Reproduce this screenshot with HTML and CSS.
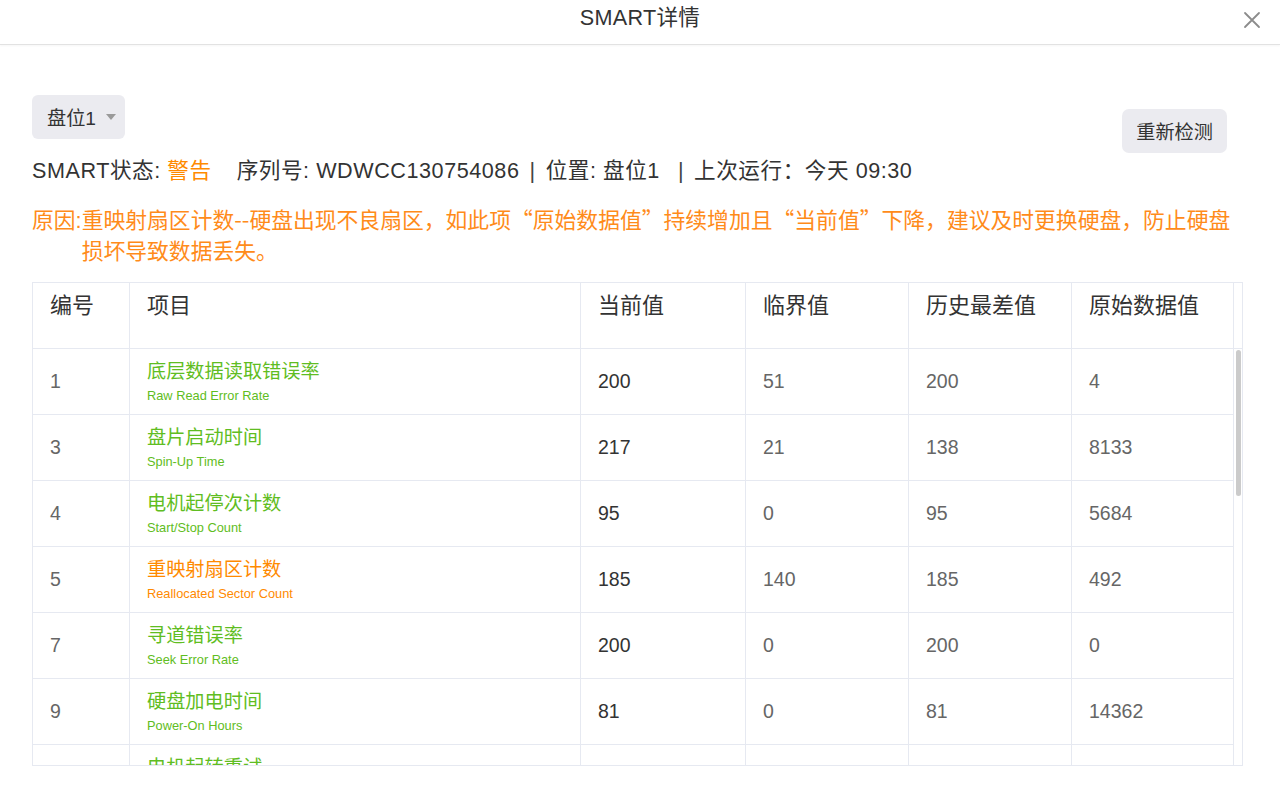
FILE: index.html
```
<!DOCTYPE html>
<html lang="zh-CN">
<head>
  <meta charset="UTF-8">
  <title>SMART详情</title>
  <meta name="viewport" content="width=device-width, initial-scale=1.0">
  <link rel="stylesheet" href="styles.css">
</head>
<body>
  <div class="dialog">
    <div class="dialog-head">
      <h1>SMART详情</h1>
      <button class="close-btn" aria-label="关闭">
        <svg width="18" height="18" viewBox="0 0 18 18"><path d="M2 2L16 16M16 2L2 16" stroke="#8c8c8c" stroke-width="1.8" stroke-linecap="round" fill="none"/></svg>
      </button>
    </div>

    <div class="dialog-body">
      <div class="toolbar">
        <div class="disk-select">盘位1<span class="caret"></span></div>
        <button class="btn">重新检测</button>
      </div>

      <p class="status">SMART状态: <span class="warn">警告</span>序列号: WDWCC130754086<span class="sep">|</span>位置: 盘位1<span class="sep wide">|</span>上次运行：今天 09:30</p>

      <div class="reason">
        <span class="reason-label">原因<span class="colon">:</span></span>
        <span>重映射扇区计数--硬盘出现不良扇区，如此项“原始数据值”持续增加且“当前值”下降，建议及时更换硬盘，防止硬盘<br>损坏导致数据丢失。</span>
      </div>

      <div class="smart-table">
        <div class="row head-row">
          <div class="cell">编号</div>
          <div class="cell">项目</div>
          <div class="cell">当前值</div>
          <div class="cell">临界值</div>
          <div class="cell">历史最差值</div>
          <div class="cell">原始数据值</div>
          <div class="gutter"></div>
        </div>
        <div class="table-body">
          <div class="rows" id="smart-rows"></div>
          <div class="scroll-track"><div class="scroll-thumb"></div></div>
        </div>
      </div>
    </div>
  </div>

  <script>
    // 编号, 中文名, 英文名, 当前值, 临界值, 历史最差值, 原始数据值, 是否告警
    const attrs = [
      ["1", "底层数据读取错误率", "Raw Read Error Rate", "200", "51", "200", "4"],
      ["3", "盘片启动时间", "Spin-Up Time", "217", "21", "138", "8133"],
      ["4", "电机起停次计数", "Start/Stop Count", "95", "0", "95", "5684"],
      ["5", "重映射扇区计数", "Reallocated Sector Count", "185", "140", "185", "492", true],
      ["7", "寻道错误率", "Seek Error Rate", "200", "0", "200", "0"],
      ["9", "硬盘加电时间", "Power-On Hours", "81", "0", "81", "14362"],
      ["10", "电机起转重试", "Spin Retry Count", "100", "0", "100", "0"],
      ["11", "磁头校准重试计数", "Calibration Retry Count", "100", "0", "100", "0"],
      ["12", "硬盘通电次数", "Power Cycle Count", "95", "0", "95", "5591"],
      ["192", "断电磁头缩回计数", "Power-off Retract Count", "200", "0", "200", "412"],
      ["193", "磁头加载/卸载计数", "Load Cycle Count", "199", "0", "199", "5273"],
      ["194", "温度", "Temperature Celsius", "112", "0", "97", "35"],
      ["196", "重映射事件计数", "Reallocation Event Count", "200", "0", "200", "0"],
      ["197", "当前待映射扇区数", "Current Pending Sector", "200", "0", "200", "0"],
      ["198", "脱机无法校正的扇区数", "Offline Uncorrectable", "100", "0", "253", "0"],
      ["199", "UltraDMA CRC错误计数", "UDMA CRC Error Count", "200", "0", "200", "0"],
      ["200", "多区域错误率", "Multi-Zone Error Rate", "100", "0", "253", "0"],
      ["240", "磁头飞行时间", "Head Flying Hours", "100", "0", "100", "0"]
    ];

    const rowsBox = document.getElementById("smart-rows");
    attrs.forEach(a => {
      const row = document.createElement("div");
      row.className = a[7] ? "row alert" : "row";
      row.innerHTML = `
        <div class="cell">${a[0]}</div>
        <div class="cell item"><span class="cn">${a[1]}</span><span class="en">${a[2]}</span></div>
        <div class="cell cur">${a[3]}</div>
        <div class="cell">${a[4]}</div>
        <div class="cell">${a[5]}</div>
        <div class="cell">${a[6]}</div>`;
      rowsBox.appendChild(row);
    });
  </script>
</body>
</html>
```
FILE: styles.css
```
* {
  box-sizing: border-box;
}
body {
  margin: 0;
  background: #fff;
  color: #333;
  font-family: "Liberation Sans", "Noto Sans CJK SC", sans-serif;
}
.dialog-head {
  height: 45px;
  border-bottom: 1px solid #e2e2e2;
  box-shadow: 0 1px 2px rgba(0, 0, 0, 0.04);
  display: grid;
  grid-template-columns: 1fr auto 1fr;
  align-items: start;
}
.dialog-head h1 {
  grid-column: 2;
  margin: 0;
  font-size: 21.6px;
  font-weight: normal;
  line-height: 36px;
  letter-spacing: 0.3px;
  color: #333;
}
.close-btn {
  grid-column: 3;
  justify-self: end;
  width: 18px;
  height: 18px;
  margin: 11px 19px 0 0;
  padding: 0;
  border: none;
  background: none;
  cursor: pointer;
}
.close-btn svg {
  display: block;
}
.dialog-body {
  padding: 50px 37px 0 32px;
}
.toolbar {
  display: flex;
  justify-content: space-between;
  align-items: flex-start;
  height: 58px;
}
.disk-select {
  display: flex;
  align-items: center;
  gap: 10px;
  height: 44px;
  padding: 0 9px 0 15px;
  background: #ebebf0;
  border-radius: 6px;
  font-size: 19.2px;
  color: #333;
}
.caret {
  width: 0;
  height: 0;
  border-left: 5px solid transparent;
  border-right: 5px solid transparent;
  border-top: 6px solid #9a9a9a;
}
.btn {
  height: 44px;
  margin: 14px 16px 0 0;
  padding: 0 14px;
  border: none;
  border-radius: 7px;
  background: #ebebf0;
  font-family: inherit;
  font-size: 19.2px;
  color: #333;
  cursor: pointer;
}
.status {
  margin: 2px 0 0;
  font-size: 21.6px;
  line-height: 32px;
  letter-spacing: 0.55px;
  white-space: nowrap;
}
.warn {
  color: #ff8a00;
  margin-right: 25px;
}
.sep {
  margin: 0 10px;
  color: #444;
}
.sep.wide {
  margin-left: 18px;
}
.reason {
  display: flex;
  margin-top: 16px;
  color: #ff8b1a;
  font-family: "Noto Sans CJK SC", sans-serif;
  font-size: 21.8px;
  line-height: 31px;
}
.reason-label {
  flex: none;
  white-space: nowrap;
}
.colon {
  font-family: "Liberation Sans", sans-serif;
}
.smart-table {
  width: 1211px;
  margin-top: 17px;
  border: 1px solid #e6e9f1;
}
.row {
  display: grid;
  grid-template-columns: 97px 451px 165px 163px 163px 162px;
  border-bottom: 1px solid #e6e9f1;
}
.head-row {
  grid-template-columns: 97px 451px 165px 163px 163px 162px 8px;
}
.cell {
  height: 65px;
  display: flex;
  align-items: center;
  padding: 0 17px;
  border-right: 1px solid #e6e9f1;
  font-size: 19.5px;
  color: #666;
}
.head-row .cell {
  align-items: flex-start;
  padding-top: 8px;
  font-size: 22px;
  line-height: 30px;
  color: #333;
}
.cell.cur {
  color: #333;
}
.cell.item {
  flex-direction: column;
  align-items: flex-start;
  justify-content: center;
  color: #5fbd22;
}
.alert .cell.item {
  color: #ff8a00;
}
.cn {
  font-size: 19.2px;
  line-height: 26px;
}
.en {
  margin-top: 2px;
  font-size: 12.8px;
  line-height: 18px;
}
.table-body {
  display: flex;
  align-items: flex-start;
  height: 416px;
  overflow: hidden;
}
.rows {
  flex: none;
  width: 1201px;
}
.scroll-track {
  width: 8px;
}
.scroll-thumb {
  height: 146px;
  margin: 1px 1px 0 2px;
  background: #cbcbcb;
  border-radius: 3px;
}
```
